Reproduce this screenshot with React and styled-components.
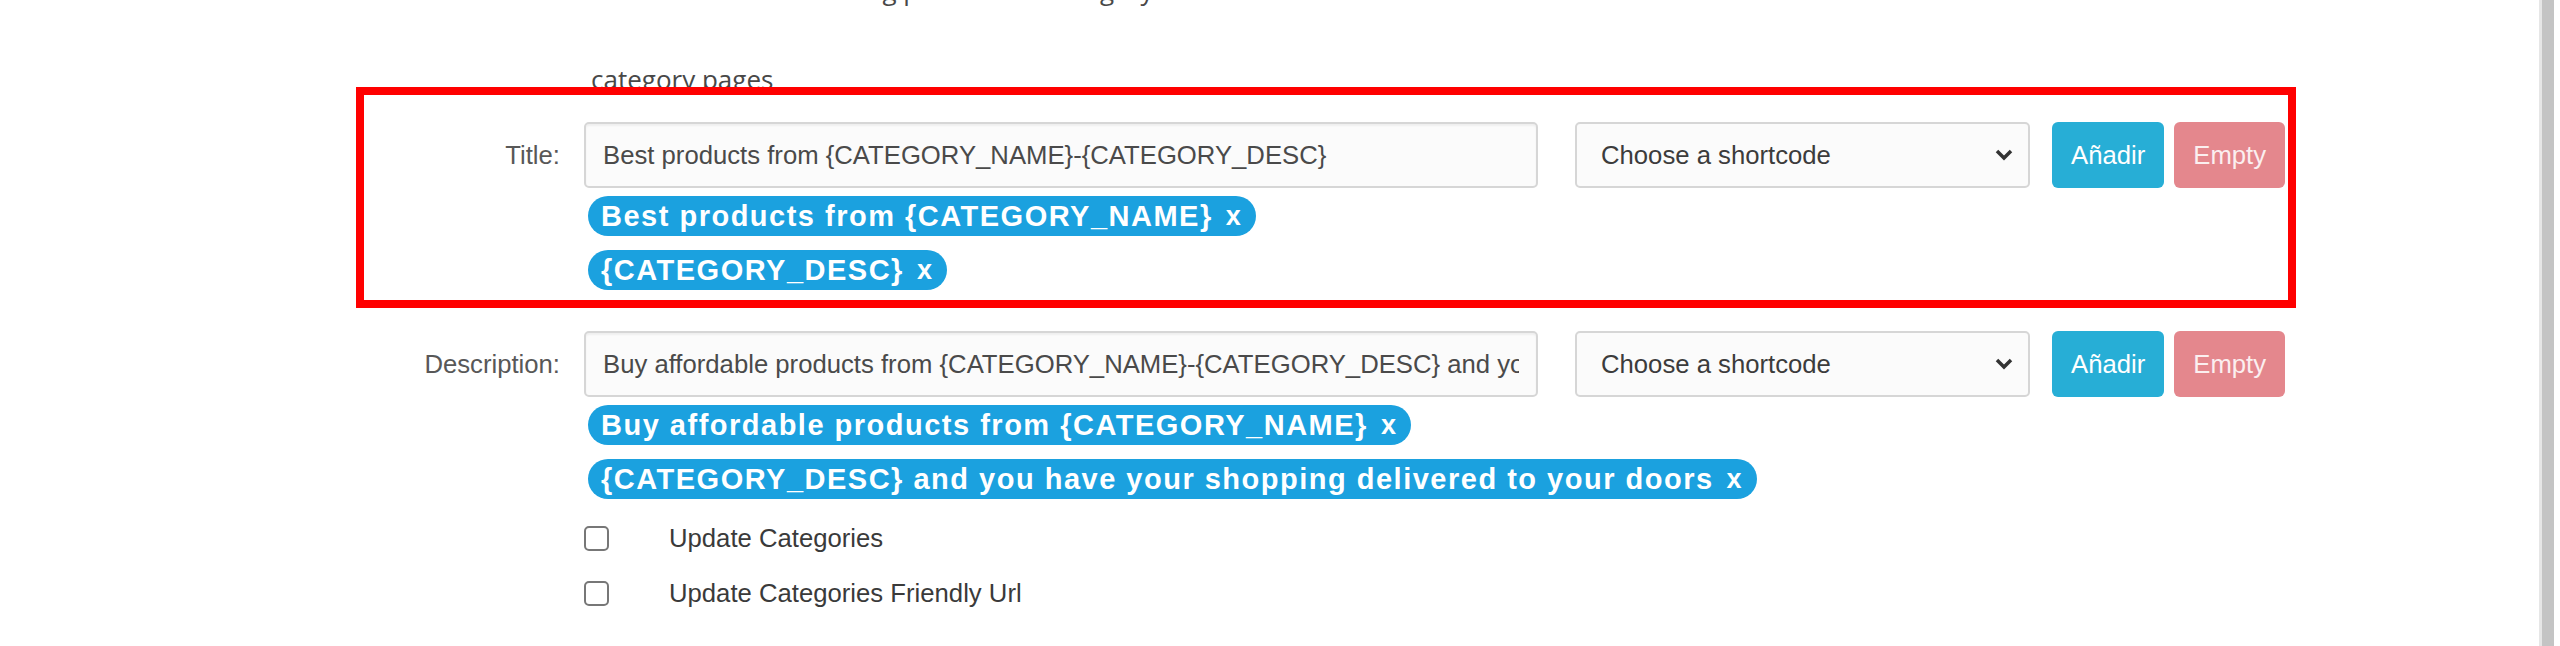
import React from 'react';
import styled, { createGlobalStyle } from 'styled-components';

const GlobalStyle = createGlobalStyle`
  html, body {
    margin: 0;
    padding: 0;
    background: #fff;
  }
  body {
    font-family: "Liberation Sans", Arial, sans-serif;
    overflow: hidden;
  }
`;

const Page = styled.div`
  display: flex;
  width: 2560px;
  height: 646px;
  overflow: hidden;
`;

const Content = styled.div`
  flex: 1;
  padding-left: 356px;
`;

const Scrollbar = styled.div`
  width: 24px;
  display: flex;
  padding-left: 3px;
  box-sizing: border-box;
`;

const Thumb = styled.div`
  width: 15px;
  background: linear-gradient(to right, #e6e6e6 0 3px, #c4c4c4 3px 100%);
`;

const Help = styled.div`
  padding-left: 235px;
  margin-top: -26px;
  margin-bottom: -8px;
  font-family: "Open Sans", sans-serif;
  font-size: 26px;
  line-height: 32px;
  color: #484848;
`;

const HelpLine = styled.div`
  white-space: nowrap;
  & + & {
    margin-top: 57px;
  }
`;

const Row = styled.div`
  position: relative;
  display: flex;
  align-items: flex-start;
  width: fit-content;
  border: 8px solid ${p => (p.$highlight ? '#ff0000' : 'transparent')};
  padding: ${p => (p.$highlight ? '27px 3px 10px 0' : '15px 3px 10px 0')};
`;

const Label = styled.label`
  width: 196px;
  margin-right: 24px;
  text-align: right;
  line-height: 66px;
  font-size: 25.7px;
  color: #585858;
`;

const Field = styled.div`
  width: 954px;
  display: flex;
  flex-direction: column;
  align-items: flex-start;
`;

const TextInput = styled.input`
  width: 100%;
  height: 66px;
  box-sizing: border-box;
  padding: 0 17px;
  border: 2px solid #d6d6d6;
  border-radius: 5px;
  background: #fbfbfb;
  box-shadow: inset 0 2px 2px rgba(0, 0, 0, 0.05);
  font-family: "Liberation Sans", Arial, sans-serif;
  font-size: 25.7px;
  color: #4a4a4a;
  outline: none;
`;

const TagList = styled.div`
  display: flex;
  flex-direction: column;
  align-items: flex-start;
  gap: 14px;
  margin: 8px 0 0 4px;
`;

const Tag = styled.span`
  display: inline-flex;
  align-items: center;
  height: 40px;
  padding: 0 14px 0 13px;
  border-radius: 20px;
  background: #1ba1df;
  color: #fff;
  font-weight: bold;
  font-size: 29px;
  letter-spacing: 1.5px;
  white-space: nowrap;
`;

const TagClose = styled.span`
  margin-left: 13px;
  font-size: 27px;
`;

const Select = styled.div`
  width: 455px;
  height: 66px;
  margin-left: 37px;
  box-sizing: border-box;
  display: flex;
  align-items: center;
  justify-content: space-between;
  padding: 0 15px 0 24px;
  border: 2px solid #d6d6d6;
  border-radius: 5px;
  background: #fbfbfb;
  font-size: 25.7px;
  color: #3c3c3c;
`;

const Actions = styled.div`
  display: flex;
  gap: 10px;
  margin-left: 22px;
`;

const Button = styled.button`
  height: 66px;
  padding: 0 19px;
  border: 0;
  border-radius: 6px;
  background: ${p => (p.$variant === 'danger' ? '#e4878d' : '#27aed6')};
  color: ${p => (p.$variant === 'danger' ? '#fbeff0' : '#fff')};
  font-family: "Liberation Sans", Arial, sans-serif;
  font-size: 25.7px;
`;

const CheckList = styled.div`
  display: flex;
  flex-direction: column;
  gap: 13px;
  padding-left: 228px;
`;

const CheckRow = styled.label`
  display: flex;
  align-items: center;
  height: 42px;
`;

const CheckBox = styled.span`
  width: 25px;
  height: 25px;
  box-sizing: border-box;
  border: 2px solid #777;
  border-radius: 5px;
  background: #fff;
`;

const CheckText = styled.span`
  margin-left: 60px;
  font-size: 25.7px;
  color: #3a3a3a;
`;

const Chevron = () => (
  <svg width="18" height="12" viewBox="0 0 18 12">
    <polyline points="2,2 9,9 16,2" fill="none" stroke="#333" strokeWidth="3.5" />
  </svg>
);

const fields = [
  {
    label: 'Title:',
    value: 'Best products from {CATEGORY_NAME}-{CATEGORY_DESC}',
    tags: ['Best products from {CATEGORY_NAME}', '{CATEGORY_DESC}'],
    highlight: true,
  },
  {
    label: 'Description:',
    value:
      'Buy affordable products from {CATEGORY_NAME}-{CATEGORY_DESC} and you have your shopping delivered to your doors',
    tags: [
      'Buy affordable products from {CATEGORY_NAME}',
      '{CATEGORY_DESC} and you have your shopping delivered to your doors',
    ],
  },
];

const checks = ['Update Categories', 'Update Categories Friendly Url'];

export default function App() {
  return (
    <Page>
      <GlobalStyle />
      <Content>
        <Help>
          <HelpLine>Write the meta title using products of category and</HelpLine>
          <HelpLine>category pages</HelpLine>
        </Help>
        {fields.map(field => (
          <Row key={field.label} $highlight={field.highlight}>
            <Label>{field.label}</Label>
            <Field>
              <TextInput readOnly defaultValue={field.value} />
              <TagList>
                {field.tags.map(tag => (
                  <Tag key={tag}>
                    {tag}
                    <TagClose>x</TagClose>
                  </Tag>
                ))}
              </TagList>
            </Field>
            <Select>
              <span>Choose a shortcode</span>
              <Chevron />
            </Select>
            <Actions>
              <Button>Añadir</Button>
              <Button $variant="danger">Empty</Button>
            </Actions>
          </Row>
        ))}
        <CheckList>
          {checks.map(text => (
            <CheckRow key={text}>
              <CheckBox />
              <CheckText>{text}</CheckText>
            </CheckRow>
          ))}
        </CheckList>
      </Content>
      <Scrollbar>
        <Thumb />
      </Scrollbar>
    </Page>
  );
}
